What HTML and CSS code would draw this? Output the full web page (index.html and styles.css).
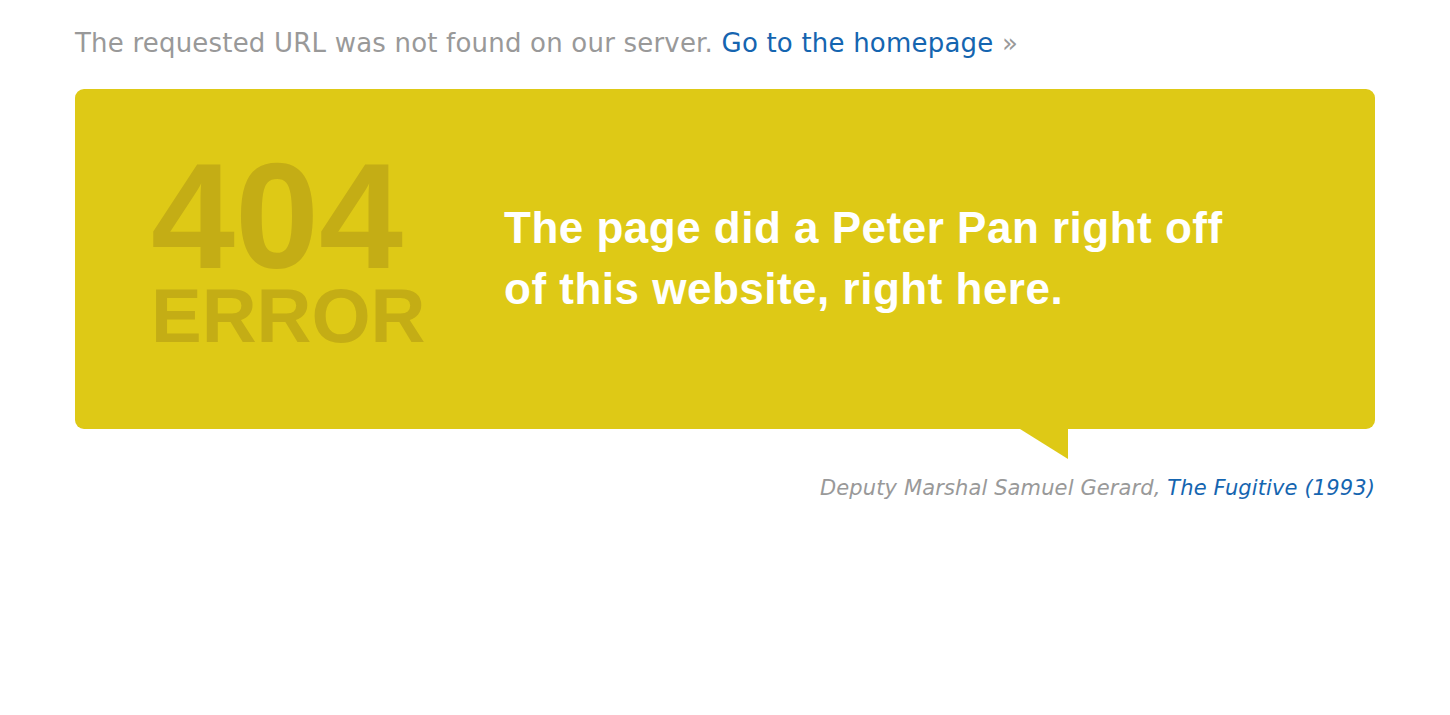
FILE: index.html
```html
<!DOCTYPE html>
<html lang="en">
<head>
<meta charset="utf-8">
<title>404 Error</title>
<link rel="stylesheet" href="styles.css">
</head>
<body>
<div class="page">
  <p class="intro">The requested URL was not found on our server. <a href="#">Go to the homepage</a> &raquo;</p>
  <div class="bubble">
    <div class="code">
      <div class="num">404</div>
      <div class="err">ERROR</div>
    </div>
    <blockquote class="quote">The page did a Peter Pan right off of this website, right here.</blockquote>
    <span class="tail"></span>
  </div>
  <p class="cite">Deputy Marshal Samuel Gerard, <a href="#">The Fugitive (1993)</a></p>
</div>
</body>
</html>
```
FILE: styles.css
```css
html, body {
  margin: 0;
  padding: 0;
  background: #fff;
}
.page {
  width: 1300px;
  padding: 25px 0 0 75px;
  font-family: "DejaVu Sans", Verdana, sans-serif;
}
.intro {
  margin: 0;
  font-size: 26px;
  letter-spacing: 0.2px;
  line-height: 36px;
  color: #999999;
}
.intro a, .cite a {
  color: #1565b0;
  text-decoration: none;
}
.bubble {
  position: relative;
  margin-top: 28px;
  height: 340px;
  background: #dec916;
  border-radius: 9px;
  display: flex;
  align-items: flex-start;
  box-sizing: border-box;
  padding: 67px 0 0 76px;
}
.code {
  width: 353px;
  flex: none;
  font-family: "Liberation Sans", Arial, sans-serif;
  font-weight: bold;
  color: #c4ad15;
}
.num {
  font-size: 151px;
  line-height: 120px;
}
.err {
  margin-top: 2px;
  font-size: 76px;
  line-height: 76px;
}
.quote {
  margin: 41px 0 0 0;
  width: 760px;
  font-family: "Liberation Sans", Arial, sans-serif;
  font-weight: bold;
  font-size: 44px;
  letter-spacing: 0.5px;
  line-height: 61px;
  color: #ffffff;
}
.tail {
  position: absolute;
  left: 945px;
  top: 100%;
  width: 0;
  height: 0;
  border-top: 30px solid #dec916;
  border-left: 48px solid transparent;
}
.cite {
  margin: 44px 0 0 0;
  text-align: right;
  font-style: italic;
  font-size: 21px;
  letter-spacing: 0.12px;
  line-height: 30px;
  color: #999999;
}
```
